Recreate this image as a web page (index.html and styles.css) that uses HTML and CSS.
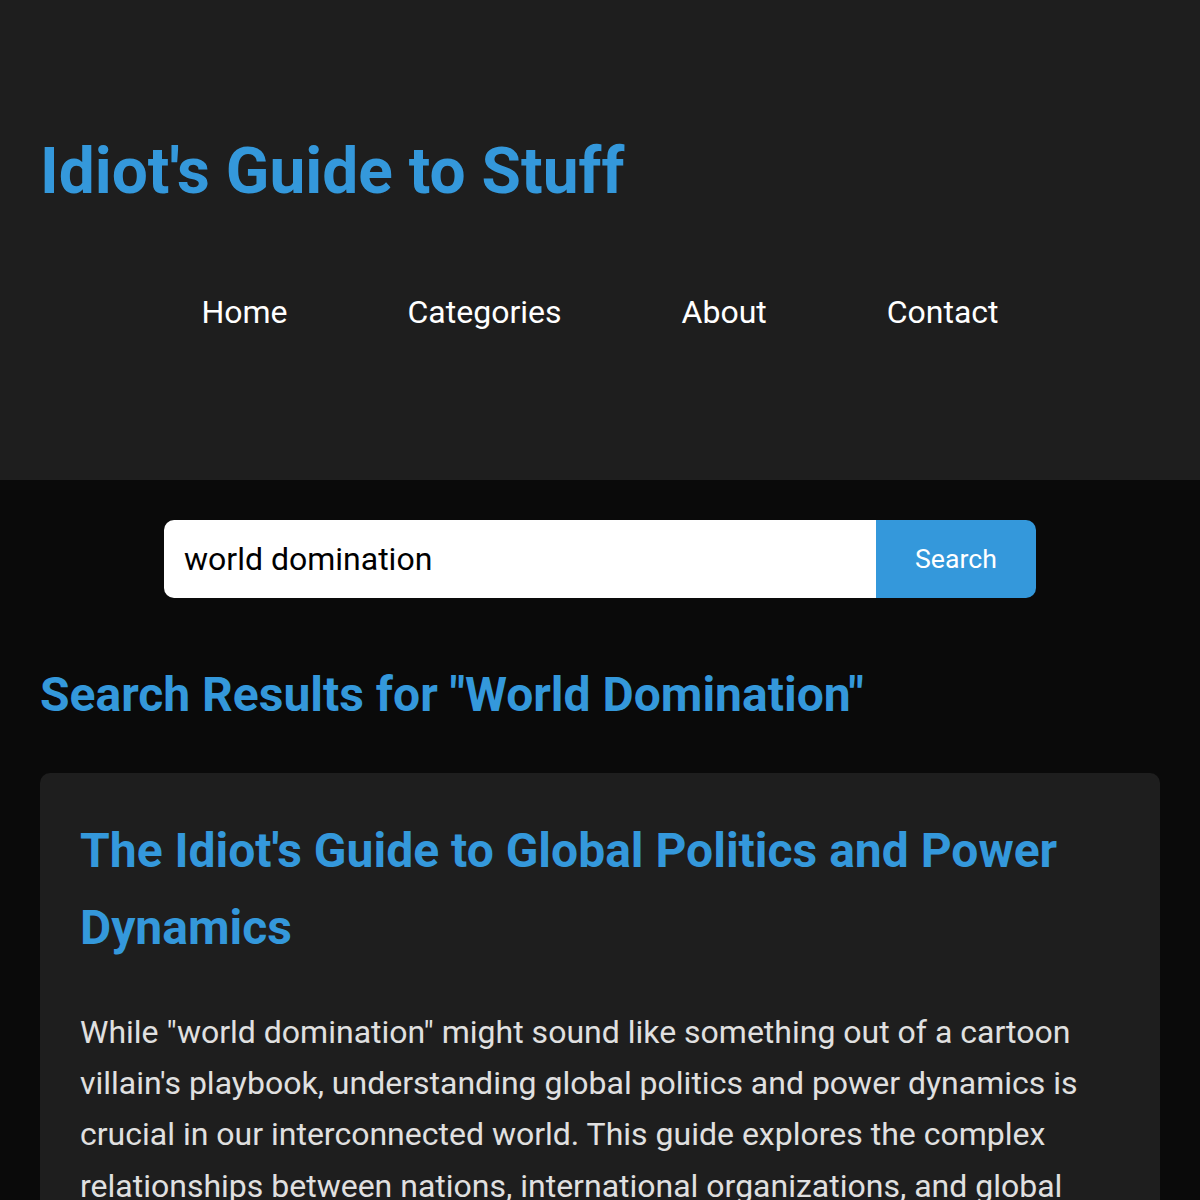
FILE: index.html
```html
<!DOCTYPE html>
<html lang="en">
  <head>
    <meta charset="UTF-8" />
    <meta name="viewport" content="width=device-width, initial-scale=1.0" />
    <title>Search Results - Idiot's Guide to Stuff</title>
    <link rel="stylesheet" href="styles.css">
  </head>
  <body>
    <header class="site-header">
      <h1 class="site-title">Idiot's Guide to Stuff</h1>
      <nav>
        <ul class="nav-list">
          <li><a href="#">Home</a></li>
          <li><a href="#">Categories</a></li>
          <li><a href="#">About</a></li>
          <li><a href="#">Contact</a></li>
        </ul>
      </nav>
    </header>

    <main class="content">
      <form class="search-form">
        <input type="text" name="q" value="world domination" />
        <button type="submit">Search</button>
      </form>

      <h2 class="results-heading">Search Results for "World Domination"</h2>

      <article class="result-card">
        <h2>The Idiot's Guide to Global Politics and Power Dynamics</h2>
        <p>
          While "world domination" might sound like something out of a cartoon
          villain's playbook, understanding global politics and power dynamics is
          crucial in our interconnected world. This guide explores the complex
          relationships between nations, international organizations, and global
          economic forces that shape the world we live in every day.
        </p>
      </article>
    </main>
  </body>
</html>
```

FILE: styles.css
```css
body {
  font-family: Roboto, "Liberation Sans", Arial, sans-serif;
  background: #0a0a0a;
  color: #e0e0e0;
  margin: 0;
  padding: 0;
  font-size: 32px;
  line-height: 1.6;
}

.site-header {
  background: #1e1e1e;
  padding: 40px;
}

.site-title {
  margin: 81px 0 0;
  font-size: 64px;
  line-height: 1.6;
  color: #3498db;
}

.nav-list {
  list-style: none;
  margin: 64px 0 101px;
  padding: 0;
  display: flex;
  justify-content: center;
  gap: 120px;
}

.nav-list a {
  color: #fff;
  text-decoration: none;
}

.content {
  padding: 40px;
}

.search-form {
  display: flex;
  width: 872px;
  margin: 0 auto 59px;
}

.search-form input {
  flex: 1;
  padding: 20px;
  border: none;
  border-radius: 10px 0 0 10px;
  font-family: inherit;
  font-size: 32px;
  color: #000;
  background: #fff;
  outline: none;
}

.search-form button {
  width: 160px;
  padding: 20px;
  border: none;
  border-radius: 0 10px 10px 0;
  background: #3498db;
  color: #fff;
  font-family: inherit;
  font-size: 26.67px;
  cursor: pointer;
}

.results-heading {
  margin: 0 0 40px;
  font-size: 48px;
  color: #3498db;
}

.result-card {
  background: #1e1e1e;
  border-radius: 10px;
  padding: 40px;
}

.result-card h2 {
  margin: 0 0 40px;
  font-size: 48px;
  color: #3498db;
}

.result-card p {
  margin: 0;
}
```
